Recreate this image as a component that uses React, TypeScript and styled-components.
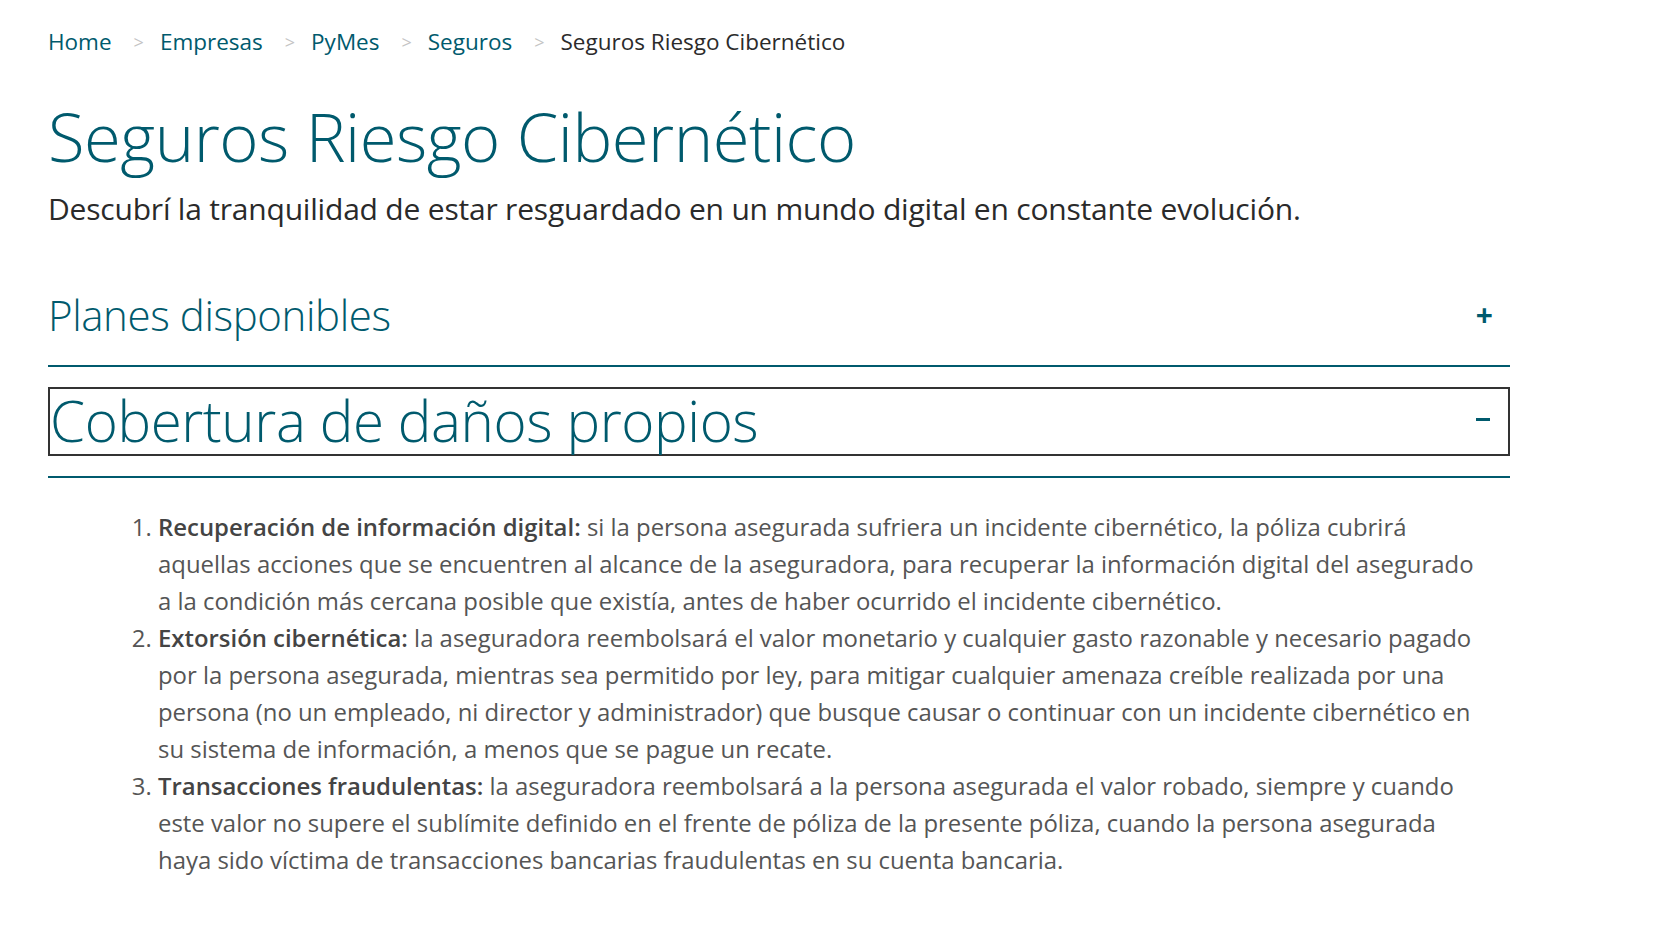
import React from "react";
import styled, { createGlobalStyle } from "styled-components";

const GlobalStyle = createGlobalStyle`
  html, body { margin: 0; padding: 0; background: #ffffff; }
  body { font-family: "Open Sans", "Noto Sans", sans-serif; }
`;

const TEAL = "#005a6d";

const Page = styled.main`
  width: 1462px;
  padding: 26px 0 40px 48px;
`;

const Crumbs = styled.nav`
  display: flex;
  align-items: center;
  font-size: 22.5px;
  line-height: 32px;
`;

const Crumb = styled.a<{ $current?: boolean }>`
  color: ${(p) => (p.$current ? "#2b2b2b" : TEAL)};
  text-decoration: none;
`;

const Sep = styled.span`
  color: #c4c4c4;
  font-size: 18px;
  padding: 0 16px 0 22px;
`;

const Title = styled.h1`
  margin: 36px 0 0;
  font-size: 67px;
  font-weight: 300;
  line-height: 84px;
  color: ${TEAL};
  letter-spacing: -0.5px;
`;

const Lead = styled.p`
  margin: 11px 0 0;
  font-size: 30px;
  line-height: 40px;
  color: #2a2a2a;
  letter-spacing: -0.2px;
`;

const Section = styled.section<{ $gap: number }>`
  margin-top: ${(p) => p.$gap}px;
`;

const Header = styled.div<{ $open?: boolean }>`
  display: flex;
  align-items: center;
  justify-content: space-between;
  box-sizing: border-box;
  ${(p) =>
    p.$open
      ? `border: 2px solid #333333; height: 69px; padding: 0 18px 0 0;`
      : `height: 86px; padding: 0 17px 14px 0;`}
`;

const HeaderTitle = styled.h2<{ $size: number }>`
  margin: 0;
  font-weight: 300;
  font-size: ${(p) => p.$size}px;
  color: ${TEAL};
  letter-spacing: -0.4px;
  line-height: 1;
`;

const Toggle = styled.span`
  color: ${TEAL};
  font-size: 30px;
  font-weight: 700;
  line-height: 1;
`;

const Minus = styled.span`
  display: block;
  width: 14px;
  height: 3px;
  margin-top: -4px;
  background: ${TEAL};
`;

const Rule = styled.hr<{ $gap: number }>`
  margin: ${(p) => p.$gap}px 0 0;
  border: 0;
  height: 2px;
  background: ${TEAL};
`;

const List = styled.ol`
  margin: 30px 0 0;
  padding: 0 28px 0 110px;
  font-size: 23.9px;
  line-height: 37px;
  color: #555555;
`;

const Item = styled.li`
  strong { font-weight: 600; color: #444444; }
`;

export default function App() {
  return (
    <>
      <GlobalStyle />
      <Page>
        <Crumbs>
          <Crumb href="#">Home</Crumb>
          <Sep>&gt;</Sep>
          <Crumb href="#">Empresas</Crumb>
          <Sep>&gt;</Sep>
          <Crumb href="#">PyMes</Crumb>
          <Sep>&gt;</Sep>
          <Crumb href="#">Seguros</Crumb>
          <Sep>&gt;</Sep>
          <Crumb $current>Seguros Riesgo Cibernético</Crumb>
        </Crumbs>
        <Title>Seguros Riesgo Cibernético</Title>
        <Lead>Descubrí la tranquilidad de estar resguardado en un mundo digital en constante evolución.</Lead>
        <Section $gap={50}>
          <Header>
            <HeaderTitle $size={42}>Planes disponibles</HeaderTitle>
            <Toggle>+</Toggle>
          </Header>
          <Rule $gap={0} />
        </Section>
        <Section $gap={20}>
          <Header $open>
            <HeaderTitle $size={56.5}>Cobertura de daños propios</HeaderTitle>
            <Minus aria-label="-" />
          </Header>
          <Rule $gap={20} />
          <List>
            <Item>
              <strong>Recuperación de información digital:</strong> si la persona asegurada sufriera un incidente cibernético, la póliza cubrirá aquellas acciones que se encuentren al alcance de la aseguradora, para recuperar la información digital del asegurado a la condición más cercana posible que existía, antes de haber ocurrido el incidente cibernético.
            </Item>
            <Item>
              <strong>Extorsión cibernética:</strong> la aseguradora reembolsará el valor monetario y cualquier gasto razonable y necesario pagado por la persona asegurada, mientras sea permitido por ley, para mitigar cualquier amenaza creíble realizada por una persona (no un empleado, ni director y administrador) que busque causar o continuar con un incidente cibernético en su sistema de información, a menos que se pague un recate.
            </Item>
            <Item>
              <strong>Transacciones fraudulentas:</strong> la aseguradora reembolsará a la persona asegurada el valor robado, siempre y cuando este valor no supere el sublímite definido en el frente de póliza de la presente póliza, cuando la persona asegurada haya sido víctima de transacciones bancarias fraudulentas en su cuenta bancaria.
            </Item>
          </List>
        </Section>
      </Page>
    </>
  );
}
